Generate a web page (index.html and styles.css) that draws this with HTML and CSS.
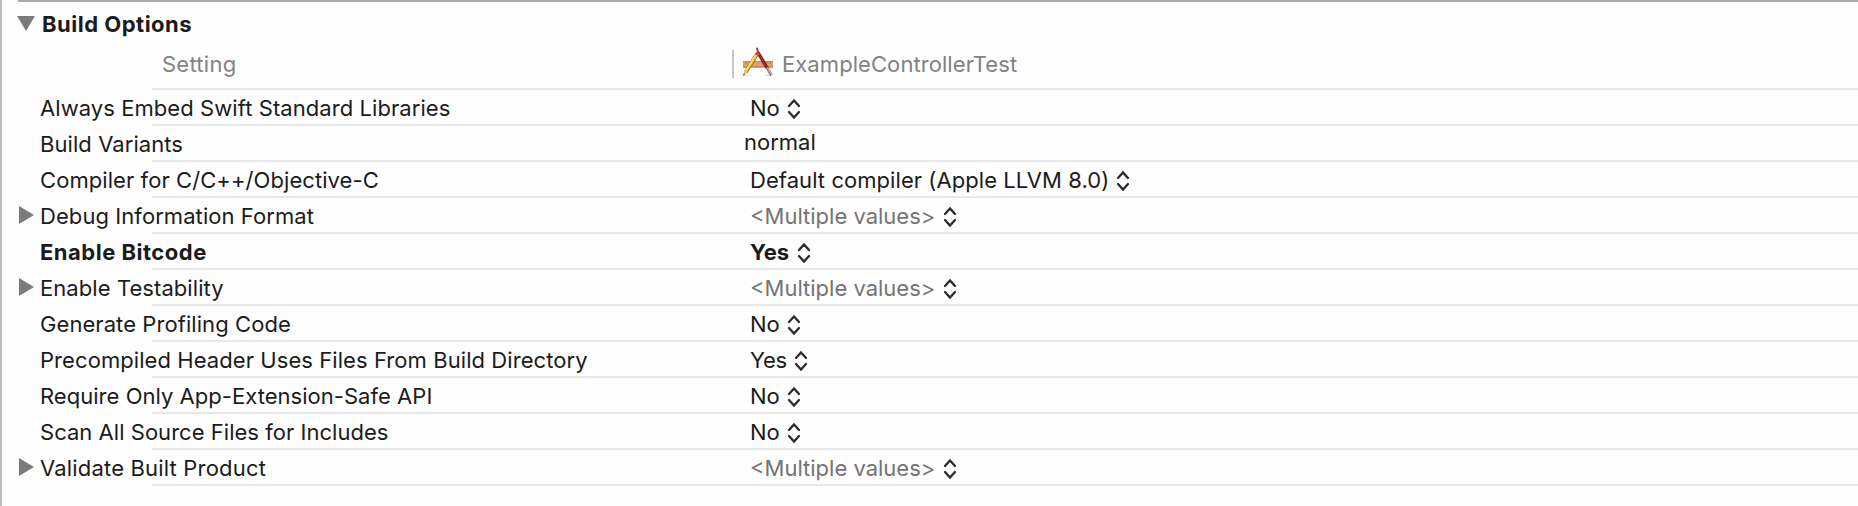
FILE: index.html
```html
<!DOCTYPE html>
<html lang="en">
<head>
<meta charset="utf-8">
<title>Build Options</title>
<link rel="stylesheet" href="styles.css">
</head>
<body>
<svg class="defs" width="0" height="0" aria-hidden="true">
  <symbol id="stepper" viewBox="0 0 14 22"><path d="M2 8 7 2.4 12 8M2 14 7 19.6 12 14" fill="none" stroke="#2b2b2b" stroke-width="2.3" stroke-linecap="round" stroke-linejoin="miter"/></symbol>
  <symbol id="closed" viewBox="0 0 15 18"><path d="M0 0 15 9 0 18Z" fill="#7b7b7b"/></symbol>
</svg>
<main class="panel">
  <div class="topline"></div>
  <header class="group">
    <svg class="open" viewBox="0 0 18 15"><path d="M0 0H18L9 15Z" fill="#7b7b7b"/></svg>
    <h1 class="title">Build Options</h1>
  </header>
  <div class="columns">
    <span class="setting">Setting</span>
    <div class="target">
      <svg class="app" viewBox="0 0 32 32">
        <path d="M2 28.3H9M23 28.3H29" stroke="#ddd" stroke-width="1.2"/>
        <rect x="1" y="14" width="30" height="6.5" fill="#dca06a"/>
        <path d="M1 14.5H31" stroke="#c58a55"/>
        <path d="M1 20H31" stroke="#b87343"/>
        <path d="M4 15V17M22 15V17M25 15V17M28 15V17" stroke="#a86a3c" stroke-width=".8"/>
        <path d="M14.8 .8 16.4 6" fill="none" stroke="#7c4a42" stroke-width="1.8"/>
        <path d="M16 5.5 25.5 21.5" fill="none" stroke="#7a2420" stroke-width="3.4"/>
        <path d="M17 7 25 20.5" stroke="#a8352e" stroke-width="1"/>
        <path d="M25 20.5 29.5 28.5" stroke="#a06d70" stroke-width="2.8"/>
        <path d="M25.4 20.5 29.8 28" stroke="#e3c9cb" stroke-width="1"/>
        <path d="M14.8 7.5 3.8 25" stroke="#806019" stroke-width="3.8"/>
        <path d="M14.6 7.5 3.7 24.8" stroke="#f2ce2e" stroke-width="2.6"/>
        <path d="M14 7.3 3.2 24.3" stroke="#fff087" stroke-width=".9"/>
        <path d="M12.8 7 16.3 9.3 17.8 6.2 14.8 4.6Z" fill="#d0404a"/>
        <path d="M2.2 23.8 5.6 26 1.2 28.8Z" fill="#e5bd83"/>
        <path d="M1.5 26.8 3 27.7 1.2 28.8Z" fill="#333"/>
      </svg>
      <span class="name">ExampleControllerTest</span>
    </div>
  </div>
  <div class="rows">
    <div class="row"><span class="mark"></span><span class="label">Always Embed Swift Standard Libraries</span><span class="value">No</span><svg class="step"><use href="#stepper"/></svg></div>
    <div class="row"><span class="mark"></span><span class="label">Build Variants</span><span class="value plain">normal</span></div>
    <div class="row"><span class="mark"></span><span class="label">Compiler for C/C++/Objective-C</span><span class="value compiler">Default compiler (Apple LLVM 8.0)</span><svg class="step"><use href="#stepper"/></svg></div>
    <div class="row"><svg class="mark"><use href="#closed"/></svg><span class="label">Debug Information Format</span><span class="value multiple">&lt;Multiple values&gt;</span><svg class="step"><use href="#stepper"/></svg></div>
    <div class="row strong"><span class="mark"></span><span class="label">Enable Bitcode</span><span class="value">Yes</span><svg class="step"><use href="#stepper"/></svg></div>
    <div class="row"><svg class="mark"><use href="#closed"/></svg><span class="label">Enable Testability</span><span class="value multiple">&lt;Multiple values&gt;</span><svg class="step"><use href="#stepper"/></svg></div>
    <div class="row"><span class="mark"></span><span class="label">Generate Profiling Code</span><span class="value">No</span><svg class="step"><use href="#stepper"/></svg></div>
    <div class="row"><span class="mark"></span><span class="label">Precompiled Header Uses Files From Build Directory</span><span class="value yes">Yes</span><svg class="step"><use href="#stepper"/></svg></div>
    <div class="row"><span class="mark"></span><span class="label tight">Require Only App-Extension-Safe API</span><span class="value">No</span><svg class="step"><use href="#stepper"/></svg></div>
    <div class="row"><span class="mark"></span><span class="label tight">Scan All Source Files for Includes</span><span class="value">No</span><svg class="step"><use href="#stepper"/></svg></div>
    <div class="row"><svg class="mark"><use href="#closed"/></svg><span class="label loose">Validate Built Product</span><span class="value multiple">&lt;Multiple values&gt;</span><svg class="step"><use href="#stepper"/></svg></div>
  </div>
</main>
</body>
</html>
```
FILE: styles.css
```css
* { box-sizing: border-box; }
body { margin: 0; background: #fefefe; color: #1b1b1b; font: 22px/34px Inter, sans-serif; }
.defs { display: block; }
.panel { height: 506px; border-left: 2px solid #bcbcbc; overflow: hidden; white-space: nowrap; }
.topline { height: 2px; margin-left: 16px; background: #a9a9a9; }
.group { display: flex; height: 44px; padding-left: 15px; }
.open { width: 18px; height: 15px; margin-top: 14px; }
.title { margin: 5px 0 0 7px; font-size: 22px; font-weight: 700; letter-spacing: 0.5px; }
.columns { display: grid; grid-template-columns: 730px 1fr; height: 44px; padding-top: 2px; color: #828282; background: linear-gradient(#e8e8e8, #e8e8e8) 150px 100% / 100% 2px no-repeat; }
.setting { padding: 5px 0 0 160px; line-height: 22px; letter-spacing: 0.25px; }
.target { display: flex; height: 28px; margin-top: 2px; border-left: 2px solid #c6c6c6; }
.app { width: 32px; height: 32px; margin: -3px 0 0 8px; }
.name { margin: -3px 0 0 8px; letter-spacing: 0.07px; }
.row { display: flex; height: 36px; background: linear-gradient(#e8e8e8, #e8e8e8) 150px 100% / 100% 2px no-repeat; }
.mark { width: 15px; height: 18px; margin: 8px 6px 0 17px; }
.label { width: 710px; padding-top: 1px; letter-spacing: 0.07px; }
.tight { letter-spacing: 0.03px; }
.loose { letter-spacing: 0.18px; }
.value { padding-top: 1px; }
.plain { margin: -2px 0 0 -6px; }
.compiler { margin-right: -1px; letter-spacing: 0.06px; }
.yes { letter-spacing: -0.3px; }
.multiple { color: #747474; }
.strong { font-weight: 700; }
.strong .label { letter-spacing: 0.5px; }
.step { width: 14px; height: 22px; margin: 8px 0 0 7.5px; }
```
